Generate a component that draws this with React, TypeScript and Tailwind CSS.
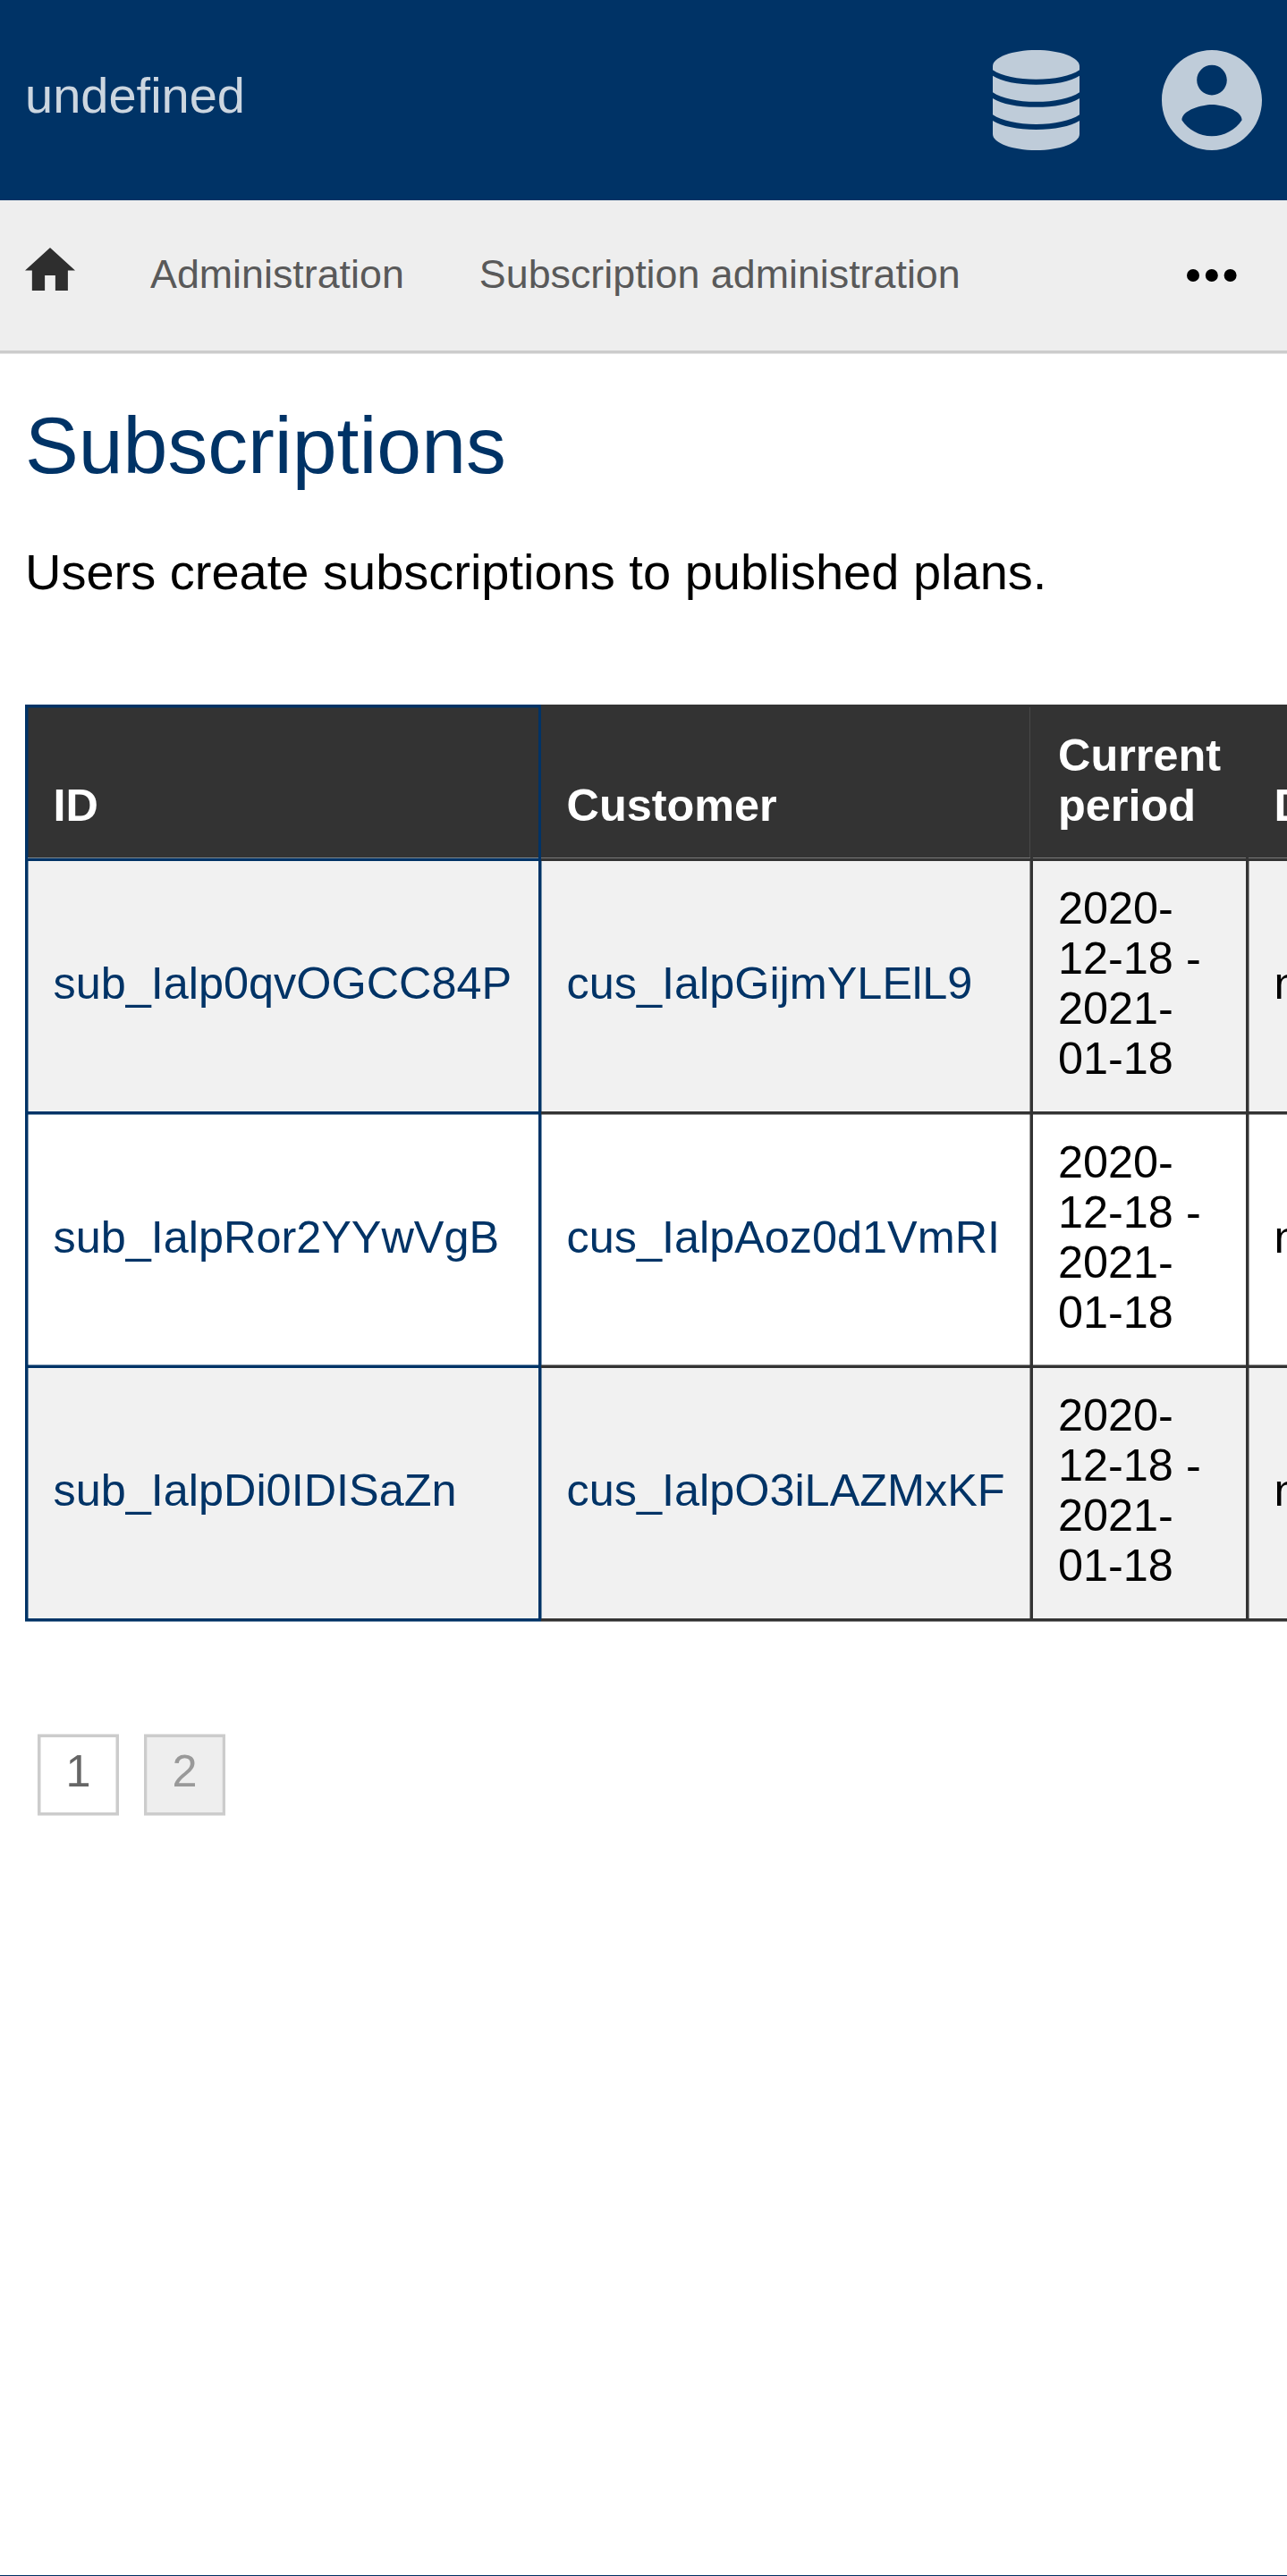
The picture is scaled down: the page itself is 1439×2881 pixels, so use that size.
import React from "react";

const edge =
  "shadow-[inset_0_var(--t)_0_var(--c),inset_0_calc(0px-var(--b))_0_var(--c),inset_var(--l)_0_0_var(--lc),inset_calc(0px-var(--r))_0_0_var(--c)]";

const columns = [
  "pl-[28.5px] border-[#003366] [--c:rgba(0,51,102,0.5)] [--lc:rgba(0,51,102,0.5)] [--l:1px] [--r:0px]",
  "pl-[28.5px] border-[#333333] [--c:rgba(51,51,51,0.5)] [--lc:rgba(0,51,102,0.5)] [--l:1px] [--r:1px]",
  "pl-7 border-[#333333] [--c:rgba(51,51,51,0.5)] [--lc:rgba(51,51,51,0.5)] [--l:0px] [--r:0px]",
  "pl-[28.5px] border-[#333333] [--c:rgba(51,51,51,0.5)] [--lc:rgba(51,51,51,0.5)] [--l:1px] [--r:0px]",
];

const rows = [
  {
    id: "sub_Ialp0qvOGCC84P",
    customer: "cus_IalpGijmYLElL9",
    style: "bg-[#f1f1f1] pt-[25px] [--t:0px] [--b:0px]",
  },
  {
    id: "sub_IalpRor2YYwVgB",
    customer: "cus_IalpAoz0d1VmRI",
    style: "bg-white pt-[26px] [--t:1px] [--b:1px]",
  },
  {
    id: "sub_IalpDi0IDISaZn",
    customer: "cus_IalpO3iLAZMxKF",
    style: "bg-[#f1f1f1] pt-[25px] [--t:0px] [--b:0px]",
  },
];

const grid = "grid grid-cols-[574px_550px_241px_400px]";
const headCell =
  "flex items-end border-t-[3px] border-r-[3px] border-b-[3px] pr-7 pt-[26px] pb-[31px]";

function DatabaseIcon() {
  return (
    <svg className="h-28 w-[97px]" viewBox="0 0 97 112" fill="currentColor">
      <path d="M0 22.3V18C0 8 22 0 48.5 0S97 8 97 18v4.3C87 29 69 32.8 48.5 32.8S10 29 0 22.3z" />
      <path d="M0 28.8c10 6.5 28 9.9 48.5 9.9S87 35.3 97 28.8v18.4c-10 6.7-28 10.6-48.5 10.6S10 53.9 0 47.2z" />
      <path d="M0 54c10 6.5 28 9.8 48.5 9.8S87 60.5 97 54v18.3c-10 6.7-28 10.6-48.5 10.6S10 79 0 72.3z" />
      <path d="M0 79.1c10 6.5 28 9.8 48.5 9.8S87 85.6 97 79.1V94c0 10-22 18-48.5 18S0 104 0 94z" />
    </svg>
  );
}

function AccountIcon() {
  return (
    <svg className="h-28 w-28" viewBox="2 2 20 20" fill="currentColor">
      <path d="M12 2C6.48 2 2 6.48 2 12s4.48 10 10 10 10-4.48 10-10S17.52 2 12 2zm0 3c1.66 0 3 1.34 3 3s-1.34 3-3 3-3-1.34-3-3 1.34-3 3-3zm0 14.2c-2.5 0-4.71-1.28-6-3.22.03-1.99 4-3.08 6-3.08 1.99 0 5.97 1.09 6 3.08-1.29 1.94-3.5 3.22-6 3.22z" />
    </svg>
  );
}

function PageLink({ n, style }: { n: number; style: string }) {
  return (
    <a
      className={
        "flex h-[90px] w-[91px] justify-center border-[3px] border-[#cccccc] pt-[9px] text-[50.4px] leading-[57px] shadow-[0_-1px_#e5e5e5,0_1px_#e5e5e5,inset_1px_0_#e5e5e5,inset_-1px_0_#e5e5e5] " +
        style
      }
    >
      {n}
    </a>
  );
}

export default function App() {
  return (
    <div className="flex h-[2881px] w-[1439px] flex-col overflow-hidden bg-white font-['Liberation_Sans',Arial,sans-serif] text-black">
      <header className="flex h-56 shrink-0 justify-between bg-[#003366] pr-7 pl-7">
        <span className="pt-[75px] text-[56px] leading-[63px] text-[#ccd6e0]">undefined</span>
        <div className="flex items-center gap-[92px] text-[#bfccd9]">
          <DatabaseIcon />
          <AccountIcon />
        </div>
      </header>

      <nav className="flex h-[171px] shrink-0 items-start border-b-[3px] border-[#cccccc] bg-[#eeeeee] pl-7 text-[44.8px] leading-[50px] text-[#595959] shadow-[0_1px_#e5e5e5]">
        <svg
          className="mt-[53px] h-[48px] w-14 shrink-0 text-[#2e2e2e]"
          viewBox="2 3 20 17"
          preserveAspectRatio="none"
          fill="currentColor"
        >
          <path d="M9.9 20v-6h4.2v6h5v-8H22L12 3 2 12h2.8v8z" />
        </svg>
        <a className="mt-[57px] ml-21">Administration</a>
        <a className="mt-[57px] ml-21">Subscription administration</a>
        <svg
          className="mt-[77px] mr-14 ml-auto h-3.5 w-14 text-black"
          viewBox="0 0 56 14"
          fill="currentColor"
        >
          <circle cx="7" cy="7" r="7" />
          <circle cx="27.8" cy="7" r="7" />
          <circle cx="48.6" cy="7" r="7" />
        </svg>
      </nav>

      <main className="flex flex-1 flex-col pl-7">
        <h1 className="mt-[53px] text-[89.6px] leading-[100px] text-[#003366]">Subscriptions</h1>
        <p className="mt-[60px] text-[56px] leading-[63px]">
          Users create subscriptions to published plans.
        </p>

        <div className="mt-[117px] w-[1411px] overflow-hidden pb-px text-[50.4px] leading-[56px]">
          <div className="w-[1768px] border-l-[3px] border-[#003366]">
            <div className={grid + " bg-[#333333] font-bold text-white"}>
              <div
                className={
                  headCell +
                  " border-[#003366] pl-[28.5px] shadow-[inset_0_-1px_#7a8894,inset_0_1px_#1a334d,inset_1px_0_#1a334d]"
                }
              >
                ID
              </div>
              <div
                className={
                  headCell +
                  " border-[#333333] pl-[28.5px] shadow-[inset_0_-1px_#777777,inset_-1px_0_#484848]"
                }
              >
                Customer
              </div>
              <div
                className={headCell + " border-[#333333] pl-7 shadow-[inset_0_-1px_#777777]"}
              >
                Current period
              </div>
              <div
                className={
                  headCell + " border-[#333333] pl-[28.5px] shadow-[inset_0_-1px_#777777]"
                }
              >
                Discount
              </div>
            </div>
            {rows.map((row) => (
              <div key={row.id} className={grid}>
                {[row.id, row.customer, "2020-12-18 - 2021-01-18", "n/a"].map((text, i) => (
                  <div
                    key={i}
                    className={
                      "flex items-center border-r-[3px] border-b-[3px] pr-7 pb-[31px] " +
                      edge +
                      " " +
                      columns[i] +
                      " " +
                      row.style +
                      (i < 2 ? " text-[#003366]" : "")
                    }
                  >
                    {text}
                  </div>
                ))}
              </div>
            ))}
            <div className={grid + " -mb-px h-px"}>
              <div className="-ml-[3px] bg-[#7f99b2]" />
              <div className="col-span-3 bg-[#999999]" />
            </div>
          </div>
        </div>

        <div className="mt-[126px] flex gap-7 pl-3.5">
          <PageLink n={1} style="bg-white text-[#666666]" />
          <PageLink n={2} style="bg-[#eeeeee] text-[#999999]" />
        </div>
      </main>

      <footer className="h-px shrink-0 bg-[#003366]" />
    </div>
  );
}
